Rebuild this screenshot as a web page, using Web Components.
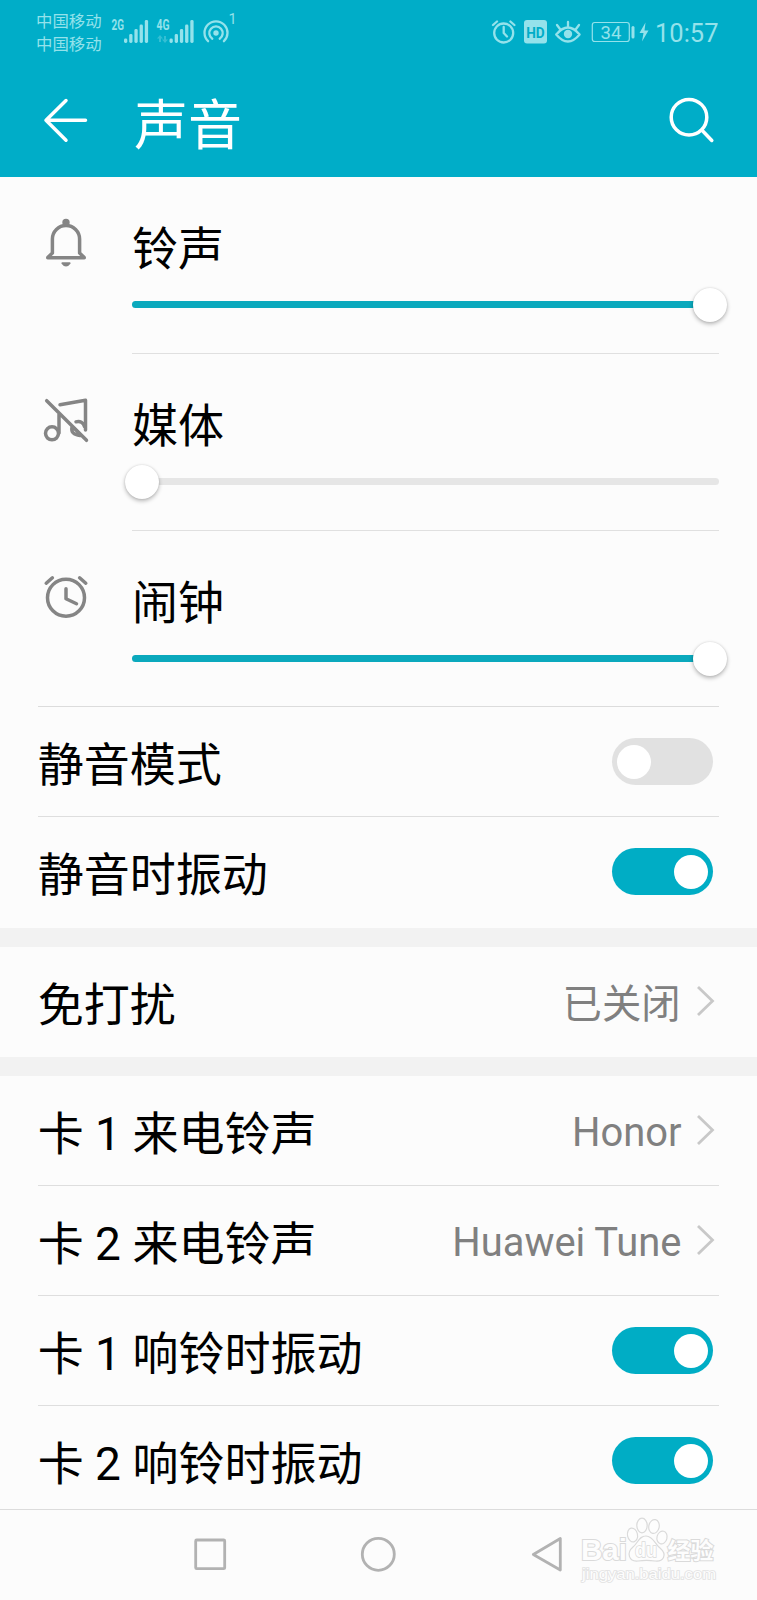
<!DOCTYPE html>
<html lang="zh-CN">
<head>
<meta charset="utf-8">
<title>声音</title>
<style>
body{margin:0;background:#fcfcfc;font-family:Roboto,"Noto Sans CJK SC",sans-serif}
</style>
</head>
<body>
<sound-page></sound-page>
<script>
const define = (name, html, init) => customElements.define(name, class extends HTMLElement {
  constructor() {
    super();
    const t = document.createElement('template');
    t.innerHTML = html;
    this.attachShadow({mode: 'open'}).append(t.content.cloneNode(true));
  }
  connectedCallback() { if (init) init(this, this.shadowRoot); }
});

const bars = x => [4.5, 9, 14, 18.5, 23].map((h, i) => `<rect x="${x + i * 5.2}" y="${43 - h}" width="3.3" height="${h}" rx="1.4"/>`).join('');

define('status-bar', `
<style>
:host{display:flex;height:64px;justify-content:space-between;color:#94e2eb;padding:0 40px 0 36px;box-sizing:border-box}
.left,.right{display:flex;align-items:flex-start}
.carriers{font-size:16.4px;line-height:23px;padding-top:10px;width:72px;white-space:nowrap}
.time{font-size:25.5px;line-height:30px;padding-top:17.5px;width:62px;white-space:nowrap}
svg{display:block}
text{font-family:Roboto,sans-serif}
</style>
<div class="left">
 <div class="carriers"><div>中国移动</div><div>中国移动</div></div>
 <svg width="132" height="64" viewBox="108 0 132 64" fill="currentColor">
  <text x="111.5" y="30" font-size="14" font-weight="700" textLength="12.5" lengthAdjust="spacingAndGlyphs">2G</text>
  ${bars(124)}
  <text x="156.5" y="30" font-size="14" font-weight="700" textLength="13" lengthAdjust="spacingAndGlyphs">4G</text>
  ${bars(169.5)}
  <path opacity=".35" d="M160 35l3 3.5h-2V42h-2v-3.500h-2zM165 43l-3-3.500h2V36h2v3.500h2z"/>
  <circle cx="216" cy="33" r="2.700"/>
  <g fill="none" stroke="currentColor" stroke-width="2.300" stroke-linecap="round"><path d="M212.300 38.700a6.700 6.700 0 1 1 7.400 0"/><path d="M208.100 41.200a11.500 11.500 0 1 1 15.800 0"/></g>
  <text x="228.500" y="24" font-size="14.500">1</text>
 </svg>
</div>
<div class="right">
 <svg width="165" height="64" viewBox="490 0 165 64" fill="currentColor">
  <g fill="none" stroke="currentColor" stroke-width="2.300" stroke-linecap="round" stroke-linejoin="round">
   <circle cx="503.700" cy="33" r="9.500"/><path d="M503.700 27v6l3.300 3.500M493 25l4-3.500M514.400 25l-4-3.500"/>
   <path d="M556.200 34.500q11.700-14 23.400 0q-11.700 14-23.400 0zM568 22v5M557 25l3 4M579 25l-3 4"/>
  </g>
  <rect x="524" y="20" width="23" height="23.500" rx="3"/>
  <text x="526.200" y="37.500" font-size="15.500" font-weight="700" fill="#00adc8" textLength="18.500" lengthAdjust="spacingAndGlyphs">HD</text>
  <circle cx="568" cy="34" r="4.200"/>
  <rect x="592.300" y="22.500" width="37" height="19" rx="2.500" fill="none" stroke="currentColor" stroke-width="1.200"/>
  <text x="600.500" y="38.700" font-size="18.500">34</text>
  <rect x="631.500" y="26" width="3" height="12.500" rx="1.500"/>
  <path d="M645.500 22.500l-6 10.500h4l-1.500 8.500 6.500-11h-4z"/>
 </svg>
 <div class="time">10:57</div>
</div>`);

define('title-bar', `
<style>
:host{display:flex;height:113px;align-items:center;color:#fff;box-sizing:border-box;padding:0 40px 0 42px}
h1{flex:1;margin:0 0 0 44px;font-weight:400;font-size:54px;line-height:60px;padding-top:12.500px}
svg{display:block}
g{fill:none;stroke:#fff;stroke-width:3.500;stroke-linecap:round;stroke-linejoin:round}
</style>
<svg width="48" height="113" viewBox="42 64 48 113"><g><path d="M66 100.500l-20 19.700 20 20M46 120.200h39.500"/></g></svg>
<h1><slot></slot></h1>
<svg width="48" height="113" viewBox="669 64 48 113"><g><circle cx="689" cy="117.200" r="17.800"/><path d="M702 130.200l9.800 10.300"/></g></svg>`);

const icons = {
  bell: `<path d="M7.700 42.700H44.300M8 42.300L12.400 38V24a13.600 13.600 0 0 1 27.200 0V38L44 42.300"/><circle cx="26" cy="7.500" r="2.700" fill="currentColor" stroke-width="2"/><path d="M22.300 48.200h7.400q-3.700 5-7.400 0z" fill="currentColor" stroke-width="1.800"/>`,
  music: `<circle cx="12" cy="41.300" r="6.500"/><path d="M19 41V22M20 12.800L45.500 8.300V38M36 29.800c4-1.300 7.500.8 8.500 4.700M32 35q-1.500 7.500 8 8.500M6.700 8.700L46.500 48.300"/><path d="M34 36l5 5" stroke-width="3"/>`,
  alarm: `<circle cx="26" cy="28.700" r="18.500"/><path d="M26 19.700v10l10.500 5.100M6.200 14.200l6.200-5.400M45.800 14.200l-6.200-5.400"/>`
};

define('volume-row', `
<style>
:host{display:grid;grid-template-columns:92px 587px;padding:0 38px 0 40px;height:177px;box-sizing:border-box;color:#000}
.icon{color:#858585;padding-top:38px}
.icon svg{display:block;overflow:visible}
.icon g{fill:none;stroke:currentColor;stroke-width:3.500;stroke-linecap:round;stroke-linejoin:round}
.body{display:flex;flex-direction:column;border-bottom:1px solid #e0e0e0;box-sizing:border-box}
.label{font-size:46px;line-height:54px;padding-top:45px}
.track{display:flex;align-items:center;height:7px;margin-top:25px;border-radius:4px;background:#e6e6e6}
.fill{flex:none;height:7px;border-radius:4px 0 0 4px;background:#0ba9bd}
.knob{flex:none;width:34px;height:34px;margin-left:-7.500px;border-radius:50%;background:#fff;box-shadow:0 2px 4px rgba(0,0,0,.28),0 0 2px rgba(0,0,0,.12)}
:host([max]) .fill{width:570px}
:host([max]) .knob{margin-left:-9px}
.rule{display:none;grid-column:1/3;height:1px;background:#dcdcdc;margin-left:-2px}
:host([full]){height:176px;grid-template-rows:175px 1px}
:host([full]) .body{border-bottom:0}
:host([full]) .rule{display:block}
</style>
<div class="icon"><svg width="50" height="50" viewBox="0 0 50 50"><g></g></svg></div>
<div class="body"><div class="label"><slot></slot></div><div class="track"><div class="fill"></div><div class="knob"></div></div></div>
<div class="rule"></div>`, (host, root) => {
  root.querySelector('g').innerHTML = icons[host.getAttribute('icon')];
});

define('setting-row', `
<style>
:host{display:flex;align-items:center;justify-content:space-between;height:110px;box-sizing:border-box;margin:0 38px;border-bottom:1px solid #dedede;padding-right:6.500px;color:#000}
:host([tall]){height:111px}
:host([last]){border-bottom-color:transparent}
:host([tall]) ::slotted(toggle-switch){margin-bottom:1px}
.label{font-size:46px;line-height:60px;padding-top:6px;margin-left:-.3px;white-space:pre}
</style>
<div class="label"><slot></slot></div><slot name="end"></slot>`);

define('toggle-switch', `
<style>
:host{display:flex;align-items:center;width:101px;height:47px;box-sizing:border-box;border-radius:24px;background:#e1e1e1;padding:0 5px}
:host([on]){background:#00adc5;justify-content:flex-end}
i{width:34px;height:34px;border-radius:50%;background:#fff}
</style><i></i>`);

define('link-value', `
<style>
:host{display:flex;align-items:center;color:#808080;font-size:39.9px;line-height:50px}
:host([cjk]){font-size:39.3px}
:host([cjk]) span{padding:6px 1px 0 0}
span{padding-top:4px;white-space:nowrap}
svg{display:block;margin:0 -2px 2px 14px}
</style><span><slot></slot></span>
<svg width="19" height="32" viewBox="0 0 19 32" fill="none" stroke="#c8c8c8" stroke-width="2.800"><path d="M2 2L16.500 16 2 30"/></svg>`);

define('section-gap', `<style>:host{display:block;height:19px;background:#f2f2f2}</style>`);

define('baidu-mark', `
<style>
:host{display:block;width:140px;height:70px}
svg{display:block;overflow:visible}
text{font-family:"Liberation Sans","Noto Sans CJK SC",sans-serif;fill:#fdfdfd;stroke:#dadada;stroke-width:2;paint-order:stroke;font-weight:700}
.o{fill:#fdfdfd;stroke:#dadada;stroke-width:1.200}
.url{font-weight:400;stroke:#e2e2e2;stroke-width:1.600}
</style>
<svg width="140" height="70" viewBox="580 1514 140 70">
 <text x="581" y="1560" font-size="30" textLength="46" lengthAdjust="spacingAndGlyphs">Bai</text>
 <g class="o"><ellipse cx="632.500" cy="1535" rx="5" ry="7" transform="rotate(-12 632.500 1535)"/><ellipse cx="642" cy="1525.500" rx="5.200" ry="7.300"/><ellipse cx="654" cy="1526.500" rx="5.200" ry="7" transform="rotate(12 654 1526.500)"/><ellipse cx="662" cy="1537.500" rx="5" ry="6.500" transform="rotate(15 662 1537.500)"/>
 <path d="M646 1536c7 0 9 8 14 12 8 7 3 14-5 13-6-.8-11-.8-17 0-9 1-12-8-5-14 5-4 6-11 13-11z"/></g>
 <text x="635" y="1557" font-size="20" textLength="22" lengthAdjust="spacingAndGlyphs" style="stroke-width:1.500">du</text>
 <text x="667.500" y="1559" font-size="23" textLength="46" lengthAdjust="spacingAndGlyphs">经验</text>
 <text class="url" x="582" y="1579" font-size="15" textLength="134" lengthAdjust="spacingAndGlyphs">jingyan.baidu.com</text>
</svg>`);

define('nav-bar', `
<style>
:host{display:flex;position:relative;height:91px;box-sizing:border-box;border-top:1px solid #dcdcdc;background:#fcfcfc;padding-left:190px}
svg{display:block}
baidu-mark{position:absolute;left:580px;top:4px}
</style>
<svg width="380" height="90" viewBox="190 1510 380 90" fill="none" stroke="#b2b2b2" stroke-width="2.800" stroke-linejoin="round">
<rect x="195.700" y="1540" width="29" height="28.700" rx="1"/><circle cx="378.300" cy="1554.300" r="16"/><path d="M560.300 1538.500v31.500l-27-15.500z"/></svg>
<baidu-mark></baidu-mark>`);

define('sound-page', `
<style>
:host{display:grid;grid-template-rows:177px 1332px 91px;height:1600px;width:757px;overflow:hidden}
header{background:#00adc8}
main{overflow:hidden;min-height:0}
</style>
<header><status-bar></status-bar><title-bar>声音</title-bar></header>
<main>
<volume-row icon="bell" max>铃声</volume-row>
<volume-row icon="music">媒体</volume-row>
<volume-row icon="alarm" max full>闹钟</volume-row>
<setting-row>静音模式<toggle-switch slot="end"></toggle-switch></setting-row>
<setting-row tall last>静音时振动<toggle-switch slot="end" on></toggle-switch></setting-row>
<section-gap></section-gap>
<setting-row last>免打扰<link-value slot="end" cjk>已关闭</link-value></setting-row>
<section-gap></section-gap>
<setting-row>卡 1 来电铃声<link-value slot="end">Honor</link-value></setting-row>
<setting-row>卡 2 来电铃声<link-value slot="end">Huawei Tune</link-value></setting-row>
<setting-row>卡 1 响铃时振动<toggle-switch slot="end" on></toggle-switch></setting-row>
<setting-row last>卡 2 响铃时振动<toggle-switch slot="end" on></toggle-switch></setting-row>
</main>
<nav-bar></nav-bar>`);
</script>
</body>
</html>
